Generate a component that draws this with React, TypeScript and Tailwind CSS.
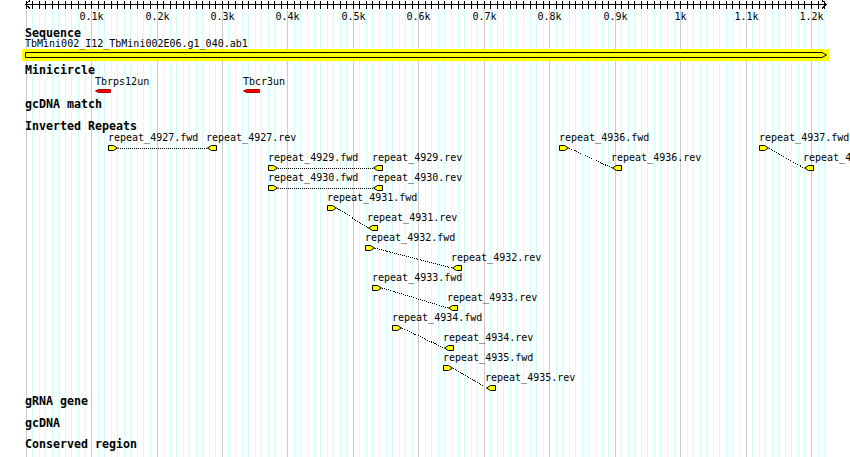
import React from 'react';

const X = (bp: number) => Math.round(25.6 + bp * 0.6545);
const SEQ_END = 1220;

const mono = "font-['DejaVu_Sans_Mono','Liberation_Mono',monospace]";

type Pos = [number, number]; // [row, x]
const REPEATS: { id: string; f: Pos; r: Pos }[] = [
  { id: '4927', f: [0, 108], r: [0, 207] },
  { id: '4929', f: [1, 268], r: [1, 373] },
  { id: '4930', f: [2, 268], r: [2, 373] },
  { id: '4931', f: [3, 327], r: [4, 368] },
  { id: '4932', f: [5, 365], r: [6, 452] },
  { id: '4933', f: [7, 372], r: [8, 448] },
  { id: '4934', f: [9, 392], r: [10, 444] },
  { id: '4935', f: [11, 443], r: [12, 486] },
  { id: '4936', f: [0, 559], r: [1, 612] },
  { id: '4937', f: [0, 759], r: [1, 804] },
];

const GridAndRuler = () => {
  const bps: number[] = [];
  for (let bp = 0; bp <= SEQ_END; bp += 10) bps.push(bp);
  const majors = bps.filter((b) => b % 100 === 0 && b > 0);
  return (
    <svg className="absolute left-0 top-0" width={850} height={457} shapeRendering="crispEdges">
      {bps.map((bp) => (
        <line
          key={'g' + bp}
          x1={X(bp) + 0.5}
          x2={X(bp) + 0.5}
          y1={10}
          y2={457}
          stroke={bp % 100 === 0 ? '#cccccc' : '#d2ffff'}
        />
      ))}
      <line x1={25} x2={827} y1={4.5} y2={4.5} stroke="#000" />
      <polyline points="30,0.5 25.5,4.5 30,8.5" fill="none" stroke="#000" />
      <polyline points="822,0.5 826.5,4.5 822,8.5" fill="none" stroke="#000" />
      {bps.map((bp) => (
        <line key={'t' + bp} x1={X(bp) + 0.5} x2={X(bp) + 0.5} y1={1} y2={9} stroke="#000" />
      ))}
      {majors.map((bp) => (
        <text
          key={'l' + bp}
          x={X(bp) + 0.5}
          y={19.5}
          textAnchor="middle"
          fontFamily="DejaVu Sans Mono, monospace"
          fontSize={10}
          fill="#000"
        >
          {bp === 1000 ? '1k' : bp > 1000 ? `${bp / 1000}k` : `0.${bp / 100}k`}
        </text>
      ))}
    </svg>
  );
};

const Track = ({ title, height, children }: { title: string; height: number; children?: React.ReactNode }) => (
  <div className="relative" style={{ height }}>
    <div className={`${mono} pl-[25px] text-[11.63px] font-bold leading-[13px] text-black whitespace-nowrap`}>{title}</div>
    {children}
  </div>
);

const FeatLabel = ({ x, top, children }: { x: number; top: number; children: React.ReactNode }) => (
  <span
    className={`${mono} absolute text-[10px] leading-[12px] text-black whitespace-nowrap`}
    style={{ left: x, top }}
  >
    {children}
  </span>
);

const fwdPts = (x: number, y: number) =>
  `${x + 0.5},${y + 0.5} ${x + 5.5},${y + 0.5} ${x + 9.5},${y + 3} ${x + 5.5},${y + 5.5} ${x + 0.5},${y + 5.5}`;
const revPts = (x: number, y: number) =>
  `${x + 9.5},${y + 0.5} ${x + 4.5},${y + 0.5} ${x + 0.5},${y + 3} ${x + 4.5},${y + 5.5} ${x + 9.5},${y + 5.5}`;

const InvertedRepeats = () => (
  <>
    <svg className="absolute left-0 top-0" width={850} height={275}>
      {REPEATS.map(({ id, f, r }) => {
        const fy = 25 + 20 * f[0];
        const ry = 25 + 20 * r[0];
        return (
          <g key={id}>
            <line
              x1={f[1] + 10}
              y1={fy + 3}
              x2={r[1]}
              y2={ry + 3}
              stroke="#000"
              strokeWidth={1}
              strokeDasharray="1 1"
              shapeRendering="crispEdges"
            />
            <polygon points={fwdPts(f[1], fy)} fill="#ffff00" stroke="#000" strokeWidth={1} />
            <polygon points={revPts(r[1], ry)} fill="#ffff00" stroke="#000" strokeWidth={1} />
          </g>
        );
      })}
    </svg>
    {REPEATS.map(({ id, f, r }) => (
      <React.Fragment key={id}>
        <FeatLabel x={f[1]} top={12 + 20 * f[0]}>{`repeat_${id}.fwd`}</FeatLabel>
        <FeatLabel x={r[1] - 1} top={12 + 20 * r[0]}>{`repeat_${id}.rev`}</FeatLabel>
      </React.Fragment>
    ))}
  </>
);

export default function App() {
  return (
    <div className="relative w-[850px] h-[457px] overflow-hidden bg-white">
      <GridAndRuler />
      <div className="h-[27px]" />
      <Track title="Sequence" height={37}>
        <svg className="absolute left-0 top-[22px]" width={850} height={12}>
          <rect x={22} y={0} width={807} height={12} fill="#ffff00" />
          <polygon points="25.5,3.5 822,3.5 826.5,6 822,8.5 25.5,8.5" fill="#ffff00" stroke="#000" />
        </svg>
        <FeatLabel x={25} top={11}>TbMini002_I12_TbMini002E06.g1_040.ab1</FeatLabel>
      </Track>
      <Track title="Minicircle" height={34}>
        <FeatLabel x={95} top={12}>Tbrps12un</FeatLabel>
        <FeatLabel x={243} top={12}>Tbcr3un</FeatLabel>
        <svg className="absolute left-0 top-[25px]" width={850} height={5}>
          <polygon points="95.5,2 98.5,0.5 110.5,0.5 110.5,3.5 98.5,3.5" fill="#ff0000" stroke="#b00000" />
          <polygon points="243.5,2 246.5,0.5 259.5,0.5 259.5,3.5 246.5,3.5" fill="#ff0000" stroke="#b00000" />
        </svg>
      </Track>
      <Track title="gcDNA match" height={22} />
      <Track title="Inverted Repeats" height={275}>
        <InvertedRepeats />
      </Track>
      <Track title="gRNA gene" height={22} />
      <Track title="gcDNA" height={21} />
      <Track title="Conserved region" height={19} />
    </div>
  );
}
